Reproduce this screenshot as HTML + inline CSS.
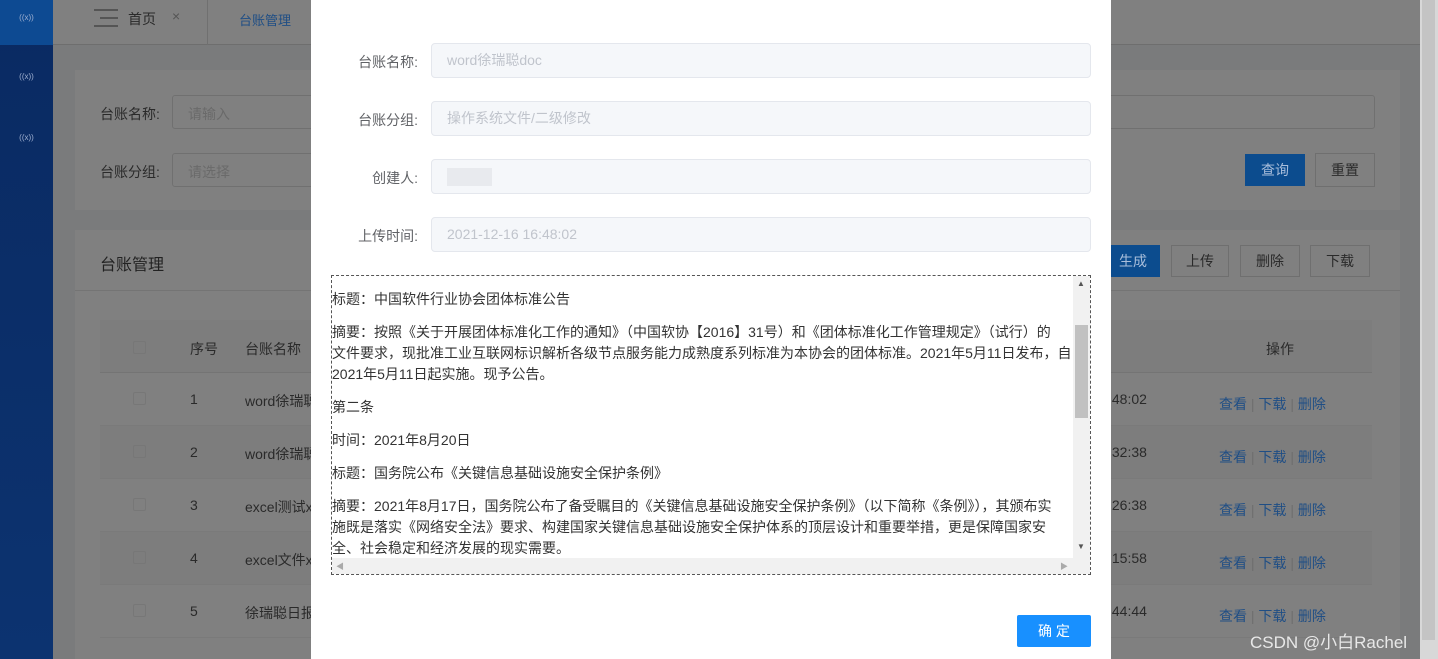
<!DOCTYPE html>
<html><head><meta charset="utf-8"><style>
*{box-sizing:border-box;margin:0;padding:0}
body{width:1438px;height:659px;overflow:hidden;position:relative;background:#7a7b7c;font-family:"Liberation Sans","Noto Sans CJK SC",sans-serif;font-size:14px;color:#333}
.a{position:absolute}
.sb{left:0;top:0;width:53px;height:659px;background:linear-gradient(#0a2a62,#0c3370)}
.ic{color:#9fb0d0;font-size:8px;width:53px;text-align:center}
.card{background:#808080}
.g{color:#2a2a2a}
.lk{color:#1f4e85}
.btn{border:1px solid #6f6f6f;background:#808080;color:#2a2a2a;text-align:center;line-height:32px;height:34px}
.row{left:100px;width:1272px;height:53px;border-bottom:1px solid #7a7a7a}
.modal{left:311px;top:0;width:800px;height:659px;background:#fff}
.lab{width:90px;text-align:right;color:#606266;font-size:14px}
.inp{left:120px;width:660px;height:35px;background:#f5f7fa;border:1px solid #e4e7ed;border-radius:4px;color:#c0c4cc;padding-left:15px;line-height:33px;font-size:14px}
.box{left:20px;top:275px;width:760px;height:300px;border:1px dashed #555;overflow:hidden}
.txt{position:absolute;left:0;top:13px;width:740px;font-size:14px;color:#333;line-height:21px;white-space:nowrap;overflow:hidden}
.txt p{margin-bottom:12px}
</style></head><body>
<div class="a sb"></div>
<div class="a" style="left:0;top:0;width:53px;height:45px;background:#0d4a92"></div>
<div class="a ic" style="top:13px">((x))</div>
<div class="a ic" style="top:72px">((x))</div>
<div class="a ic" style="top:133px">((x))</div>
<div class="a" style="left:53px;top:0;width:1367px;height:45px;background:#808080;border-bottom:1px solid #6e6e6e"></div>
<div class="a" style="left:94px;top:9px;width:24px;height:18px;border-top:2px solid #555;border-bottom:2px solid #555"></div>
<div class="a" style="left:100px;top:17px;width:18px;height:2px;background:#555"></div>
<div class="a g" style="left:128px;top:9px">首页</div>
<div class="a" style="left:172px;top:8px;color:#555">×</div>
<div class="a" style="left:207px;top:0;width:1px;height:45px;background:#707070"></div>
<div class="a lk" style="left:239px;top:10px;font-size:13px">台账管理</div>
<div class="a card" style="left:75px;top:70px;width:1325px;height:140px"></div>
<div class="a g" style="left:100px;top:104px">台账名称:</div>
<div class="a" style="left:172px;top:95px;width:1203px;height:34px;border:1px solid #707070;border-radius:3px;color:#6a6a6a;padding:8px 15px">请输入</div>
<div class="a g" style="left:100px;top:162px">台账分组:</div>
<div class="a" style="left:172px;top:153px;width:200px;height:34px;border:1px solid #707070;border-radius:3px;color:#6a6a6a;padding:8px 15px">请选择</div>
<div class="a" style="left:1245px;top:154px;width:60px;height:32px;background:#0c4c8e;color:#a9bedb;text-align:center;line-height:32px">查询</div>
<div class="a btn" style="left:1315px;top:153px;width:60px">重置</div>
<div class="a card" style="left:75px;top:230px;width:1325px;height:429px"></div>
<div class="a" style="left:75px;top:290px;width:1325px;height:1px;background:#747474"></div>
<div class="a" style="left:100px;top:251px;font-size:16px;color:#222">台账管理</div>
<div class="a" style="left:1111px;top:245px;width:49px;height:32px;background:#0c4c8e;color:#a9bedb;line-height:32px;padding-left:8px">生成</div>
<div class="a btn" style="left:1171px;top:245px;width:58px;height:32px;line-height:30px">上传</div>
<div class="a btn" style="left:1240px;top:245px;width:60px;height:32px;line-height:30px">删除</div>
<div class="a btn" style="left:1310px;top:245px;width:60px;height:32px;line-height:30px">下载</div>
<div class="a" style="left:100px;top:320px;width:1272px;height:53px;background:#7d7d7d;border-bottom:1px solid #747474"></div>
<div class="a" style="left:133px;top:341px;width:13px;height:13px;border:1px solid #777;border-radius:2px"></div>
<div class="a g" style="left:190px;top:339px">序号</div>
<div class="a g" style="left:245px;top:339px">台账名称</div>
<div class="a g" style="left:1266px;top:339px">操作</div>
<div class="a row" style="top:373px"></div>
<div class="a row" style="top:426px;background:#7d7d7d"></div>
<div class="a row" style="top:479px"></div>
<div class="a row" style="top:532px;background:#7d7d7d"></div>
<div class="a row" style="top:585px"></div>
<div class="a" style="left:133px;top:392px;width:13px;height:13px;border:1px solid #777;border-radius:2px"></div>
<div class="a" style="left:133px;top:445px;width:13px;height:13px;border:1px solid #777;border-radius:2px"></div>
<div class="a" style="left:133px;top:498px;width:13px;height:13px;border:1px solid #777;border-radius:2px"></div>
<div class="a" style="left:133px;top:551px;width:13px;height:13px;border:1px solid #777;border-radius:2px"></div>
<div class="a" style="left:133px;top:604px;width:13px;height:13px;border:1px solid #777;border-radius:2px"></div>
<div class="a g" style="left:190px;top:391px">1</div>
<div class="a g" style="left:190px;top:444px">2</div>
<div class="a g" style="left:190px;top:497px">3</div>
<div class="a g" style="left:190px;top:550px">4</div>
<div class="a g" style="left:190px;top:603px">5</div>
<div class="a g" style="left:245px;top:391px">word徐瑞聪</div>
<div class="a g" style="left:245px;top:444px">word徐瑞聪</div>
<div class="a g" style="left:245px;top:497px">excel测试x</div>
<div class="a g" style="left:245px;top:550px">excel文件x</div>
<div class="a g" style="left:245px;top:603px">徐瑞聪日报</div>
<div class="a g" style="left:1108px;top:391px">:48:02</div>
<div class="a g" style="left:1108px;top:444px">:32:38</div>
<div class="a g" style="left:1108px;top:497px">:26:38</div>
<div class="a g" style="left:1108px;top:550px">:15:58</div>
<div class="a g" style="left:1108px;top:603px">:44:44</div>
<div class="a lk" style="left:1219px;top:394px">查看 <span style="color:#6e6e6e">|</span> 下载 <span style="color:#6e6e6e">|</span> 删除</div>
<div class="a lk" style="left:1219px;top:447px">查看 <span style="color:#6e6e6e">|</span> 下载 <span style="color:#6e6e6e">|</span> 删除</div>
<div class="a lk" style="left:1219px;top:500px">查看 <span style="color:#6e6e6e">|</span> 下载 <span style="color:#6e6e6e">|</span> 删除</div>
<div class="a lk" style="left:1219px;top:553px">查看 <span style="color:#6e6e6e">|</span> 下载 <span style="color:#6e6e6e">|</span> 删除</div>
<div class="a lk" style="left:1219px;top:606px">查看 <span style="color:#6e6e6e">|</span> 下载 <span style="color:#6e6e6e">|</span> 删除</div>
<div class="a" style="left:1420px;top:0;width:18px;height:659px;background:#d8d8d8"></div>
<div class="a" style="left:1422px;top:0;width:13px;height:640px;background:#c4c4c4"></div>
<div class="a" style="left:1250px;top:628px;color:#e8e8e8;font-size:17px">CSDN @小白Rachel</div>

<div class="a modal">
<div class="a lab" style="left:17px;top:52px">台账名称:</div>
<div class="a inp" style="top:43px">word徐瑞聪doc</div>
<div class="a lab" style="left:17px;top:110px">台账分组:</div>
<div class="a inp" style="top:101px">操作系统文件/二级修改</div>
<div class="a lab" style="left:17px;top:168px">创建人:</div>
<div class="a inp" style="top:159px"><span style="display:inline-block;width:45px;height:18px;background:#e8eaee;vertical-align:middle"></span></div>
<div class="a lab" style="left:17px;top:226px">上传时间:</div>
<div class="a inp" style="top:217px">2021-12-16 16:48:02</div>
<div class="a box">
<div class="txt">
<p>标题：中国软件行业协会团体标准公告</p>
<p>摘要：按照《关于开展团体标准化工作的通知》（中国软协【2016】31号）和《团体标准化工作管理规定》（试行）的<br>文件要求，现批准工业互联网标识解析各级节点服务能力成熟度系列标准为本协会的团体标准。2021年5月11日发布，自<br>2021年5月11日起实施。现予公告。</p>
<p>第二条</p>
<p>时间：2021年8月20日</p>
<p>标题：国务院公布《关键信息基础设施安全保护条例》</p>
<p>摘要：2021年8月17日，国务院公布了备受瞩目的《关键信息基础设施安全保护条例》（以下简称《条例》），其颁布实<br>施既是落实《网络安全法》要求、构建国家关键信息基础设施安全保护体系的顶层设计和重要举措，更是保障国家安<br>全、社会稳定和经济发展的现实需要。</p>
</div>
<div class="a" style="left:741px;top:0;width:17px;height:282px;background:#f1f1f1"></div>
<div class="a" style="left:743px;top:49px;width:13px;height:93px;background:#c1c1c1"></div>
<div class="a" style="left:745px;top:3px;font-size:8px;color:#555">▲</div>
<div class="a" style="left:745px;top:266px;font-size:8px;color:#555">▼</div>
<div class="a" style="left:0;top:282px;width:758px;height:16px;background:#f1f1f1"></div>
<div class="a" style="left:4px;top:285px;font-size:8px;color:#aaa">◀</div>
<div class="a" style="left:728px;top:285px;font-size:8px;color:#aaa">▶</div>
</div>
<div class="a" style="left:706px;top:615px;width:74px;height:32px;background:#1890ff;color:#fff;text-align:center;line-height:32px;font-size:14px;border-radius:2px">确 定</div>
</div>
</body></html>
